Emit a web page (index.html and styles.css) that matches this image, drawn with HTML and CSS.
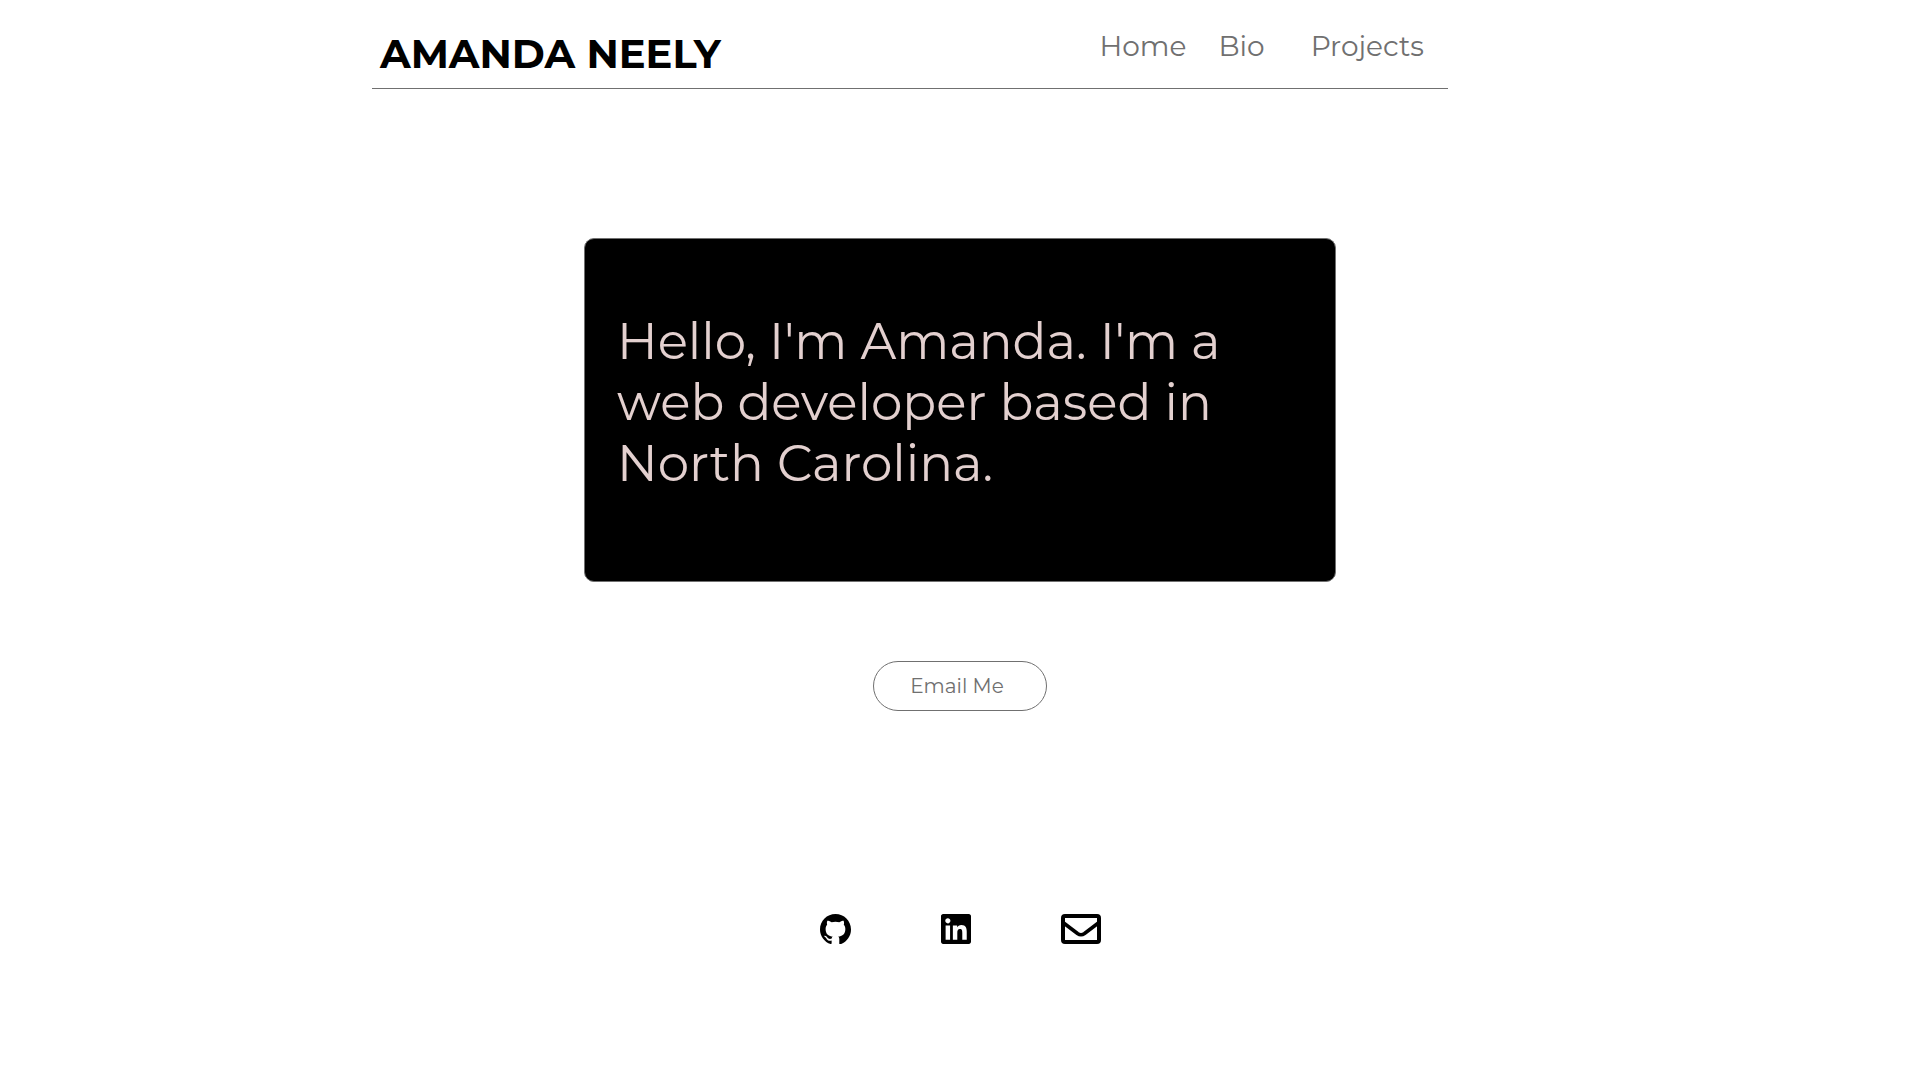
FILE: index.html
```html
<!DOCTYPE html>
<html lang="en">
<head>
<meta charset="utf-8">
<meta name="viewport" content="width=device-width, initial-scale=1">
<title>Amanda Neely</title>
<link rel="stylesheet" href="styles.css">
</head>
<body>
<div class="page">
  <header class="header">
    <h1 class="brand">AMANDA NEELY</h1>
    <nav class="nav">
      <a href="#home">Home</a>
      <a href="#bio">Bio</a>
      <a href="#projects">Projects</a>
    </nav>
  </header>
  <main class="main" id="home">
    <section class="hero">
      <p class="intro">Hello, I'm Amanda. I'm a web developer based in North Carolina.</p>
    </section>
    <button class="email" type="button">Email Me</button>
  </main>
  <footer class="social">
    <a href="#github" aria-label="GitHub">
      <svg width="31" height="30" viewBox="0 0 24 23.41" preserveAspectRatio="none"><path d="M12 0C5.37 0 0 5.37 0 12c0 5.3 3.438 9.8 8.205 11.385.6.113.82-.258.82-.577 0-.285-.01-1.04-.015-2.04-3.338.724-4.042-1.61-4.042-1.61C4.422 18.07 3.633 17.7 3.633 17.7c-1.087-.744.084-.729.084-.729 1.205.084 1.838 1.236 1.838 1.236 1.07 1.835 2.809 1.305 3.495.998.108-.776.417-1.305.76-1.605-2.665-.3-5.466-1.332-5.466-5.93 0-1.31.465-2.38 1.235-3.22-.135-.303-.54-1.523.105-3.176 0 0 1.005-.322 3.3 1.23.96-.267 1.98-.399 3-.405 1.02.006 2.04.138 3 .405 2.28-1.552 3.285-1.23 3.285-1.23.645 1.653.24 2.873.12 3.176.765.84 1.23 1.91 1.23 3.22 0 4.61-2.805 5.625-5.475 5.92.42.36.81 1.096.81 2.22 0 1.606-.015 2.896-.015 3.286 0 .315.21.69.825.57C20.565 21.795 24 17.295 24 12c0-6.63-5.37-12-12-12"/></svg>
    </a>
    <a href="#linkedin" aria-label="LinkedIn">
      <svg width="30" height="30" viewBox="0 0 448 448"><path d="M416 0H31.900C14.300 0 0 14.500 0 32.300v383.400C0 433.500 14.300 448 31.900 448H416c17.600 0 32-14.500 32-32.300V32.300C448 14.500 433.600 0 416 0zM135.400 384H69V170.200h66.500V384zM102.200 141c-21.300 0-38.500-17.300-38.500-38.500S80.900 64 102.200 64c21.200 0 38.500 17.300 38.500 38.500 0 21.300-17.200 38.500-38.500 38.500zm282.100 243h-66.400V280c0-24.800-.5-56.700-34.500-56.700-34.600 0-39.900 27-39.900 54.900V384h-66.400V170.200h63.700v29.200h.9c8.900-16.800 30.600-34.500 62.900-34.500 67.200 0 79.700 44.300 79.700 101.900V384z"/></svg>
    </a>
    <a href="#email" aria-label="Email">
      <svg width="40" height="30" viewBox="0 0 40 30" fill="none" stroke="#000" stroke-width="4"><rect x="2" y="2" width="36" height="26" rx="2"/><path d="M2 8.500 16.500 19.500Q20 22 23.500 19.500L38 8.500" stroke-width="3.600"/></svg>
    </a>
  </footer>
</div>
</body>
</html>
```
FILE: styles.css
```css
* { box-sizing: border-box; }
body {
  margin: 0;
  background: #fff;
  color: #000;
  font-family: Montserrat, Inter, "Open Sans", sans-serif;
}
.page {
  max-width: 1176px;
  margin: 0 auto;
}
.header {
  display: flex;
  justify-content: space-between;
  align-items: flex-start;
  margin-right: 100px;
  padding: 28px 24px 8px 8px;
  border-bottom: 1px solid #707070;
}
.brand {
  margin: 0;
  font-size: 40px;
  line-height: 52px;
  font-weight: 700;
}
.nav {
  display: flex;
  gap: 32px;
  font-size: 28px;
  line-height: 36px;
}
.nav a {
  color: #707070;
  text-decoration: none;
}
.nav a:last-child { margin-left: 14px; }
.main {
  display: flex;
  flex-direction: column;
  align-items: center;
  gap: 79px;
  padding-top: 149px;
}
.hero {
  width: 100%;
  max-width: 752px;
  padding: 72px 96px 87px 32px;
  background: #000;
  border: 1px solid #707070;
  border-radius: 10px;
}
.intro {
  margin: 0;
  color: #e3d0cf;
  font-size: 50px;
  line-height: 61px;
}
.email {
  width: 174px;
  height: 50px;
  padding: 0 6px 0 0;
  border: 1px solid #707070;
  border-radius: 25px;
  background: #fff;
  color: #707070;
  font: inherit;
  font-size: 20px;
}
.social {
  display: flex;
  justify-content: center;
  gap: 90px;
  padding: 203px 0 80px;
}
.social a { color: #000; }
.social svg { display: block; }
```
